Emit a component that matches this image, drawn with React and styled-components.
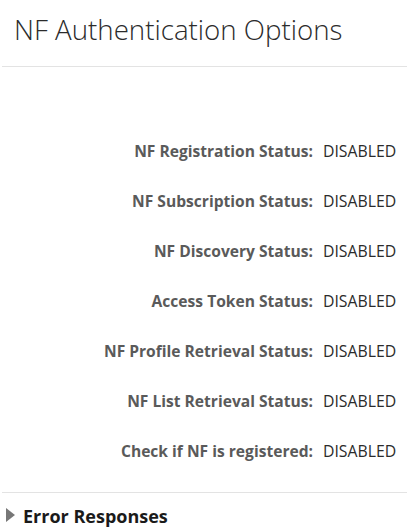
import React from "react";
import styled, { createGlobalStyle } from "styled-components";

const Global = createGlobalStyle`
  html, body { margin: 0; padding: 0; background: #fff; }
  body { font-family: "Open Sans", "Noto Sans", sans-serif; }
`;

const Page = styled.div`
  width: 407px;
  height: 531px;
  overflow: hidden;
  display: flex;
  flex-direction: column;
`;

const Header = styled.div`
  padding: 11px 0 0 12px;
  height: 67px;
  box-sizing: border-box;
  border-bottom: 1px solid #e3e3e3;
  margin-left: 2px;
`;

const Title = styled.h1`
  margin: 0;
  font-weight: 300;
  font-size: 27.7px;
  line-height: 36px;
  color: #2b2b2b;
`;

const Body = styled.div`
  padding: 73px 0 30px;
  display: flex;
  flex-direction: column;
  gap: 28px;
  border-bottom: 1px solid #e3e3e3;
  margin-left: 2px;
`;

const Row = styled.div`
  display: grid;
  grid-template-columns: 311px auto;
  column-gap: 10px;
  align-items: center;
  height: 22px;
`;

const Label = styled.span`
  text-align: right;
  font-weight: 700;
  font-size: 15.6px;
  color: #5a5a5a;
  white-space: nowrap;
`;

const Value = styled.span`
  font-size: 15.8px;
  color: #2b2b2b;
  white-space: nowrap;
`;

const Section = styled.div`
  display: flex;
  align-items: center;
  gap: 8px;
  padding: 11px 0 0 6px;
`;

const Arrow = styled.span`
  width: 0;
  height: 0;
  margin-top: -2px;
  border-top: 7px solid transparent;
  border-bottom: 7px solid transparent;
  border-left: 9px solid #777;
`;

const SectionTitle = styled.span`
  font-weight: 700;
  font-size: 18px;
  color: #1a1a1a;
`;

const rows = [
  "NF Registration Status:",
  "NF Subscription Status:",
  "NF Discovery Status:",
  "Access Token Status:",
  "NF Profile Retrieval Status:",
  "NF List Retrieval Status:",
  "Check if NF is registered:",
];

export default function App() {
  return (
    <Page>
      <Global />
      <Header>
        <Title>NF Authentication Options</Title>
      </Header>
      <Body>
        {rows.map((r) => (
          <Row key={r}>
            <Label>{r}</Label>
            <Value>DISABLED</Value>
          </Row>
        ))}
      </Body>
      <Section>
        <Arrow />
        <SectionTitle>Error Responses</SectionTitle>
      </Section>
    </Page>
  );
}
